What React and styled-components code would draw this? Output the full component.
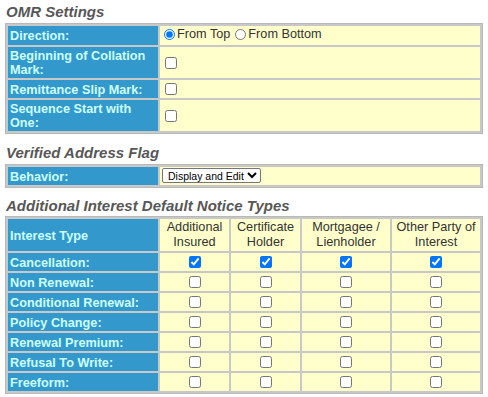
import React from "react";
import styled, { createGlobalStyle } from "styled-components";

const GlobalStyle = createGlobalStyle`
  body {
    margin: 0;
    padding: 3px 5px;
    background: #fff;
    font-family: "Liberation Sans", Arial, sans-serif;
    font-size: 12.7px;
    color: #333;
  }
`;

const interestRows = [
  { label: "Cancellation:", checked: true },
  { label: "Non Renewal:" },
  { label: "Conditional Renewal:" },
  { label: "Policy Change:" },
  { label: "Renewal Premium:" },
  { label: "Refusal To Write:" },
  { label: "Freeform:" },
];

const interestCols = [
  { lines: ["Additional", "Insured"], width: 69 },
  { lines: ["Certificate", "Holder"], width: 69 },
  { lines: ["Mortgagee /", "Lienholder"], width: 88 },
  { lines: ["Other Party of", "Interest"], width: 88 },
];

export default function App() {
  return (
    <Page>
      <GlobalStyle />
      <Heading>OMR Settings</Heading>
      <Grid>
        <tbody>
          <tr>
            <Label>Direction:</Label>
            <Value>
              <RadioLabel>
                <Radio type="radio" name="dir" defaultChecked />
                From Top
              </RadioLabel>
              <RadioLabel>
                <Radio type="radio" name="dir" />
                From Bottom
              </RadioLabel>
            </Value>
          </tr>
          <tr>
            <Label>Beginning of Collation Mark:</Label>
            <Value>
              <Check type="checkbox" />
            </Value>
          </tr>
          <tr>
            <Label>Remittance Slip Mark:</Label>
            <Value>
              <Check type="checkbox" />
            </Value>
          </tr>
          <tr>
            <Label>Sequence Start with One:</Label>
            <Value>
              <Check type="checkbox" />
            </Value>
          </tr>
        </tbody>
      </Grid>

      <Heading $top={10}>Verified Address Flag</Heading>
      <Grid>
        <tbody>
          <tr>
            <Label>Behavior:</Label>
            <Value>
              <Select defaultValue="edit">
                <option value="edit">Display and Edit</option>
                <option value="display">Display Only</option>
              </Select>
            </Value>
          </tr>
        </tbody>
      </Grid>

      <Heading $top={9} $bottom={1}>
        Additional Interest Default Notice Types
      </Heading>
      <Grid>
        <tbody>
          <tr>
            <Label>Interest Type</Label>
            {interestCols.map((col) => (
              <ColHead key={col.lines[0]} $w={col.width}>
                {col.lines[0]}
                <br />
                {col.lines[1]}
              </ColHead>
            ))}
          </tr>
          {interestRows.map((row) => (
            <tr key={row.label}>
              <Label>{row.label}</Label>
              {interestCols.map((col) => (
                <Center key={col.lines[0]}>
                  <Check type="checkbox" defaultChecked={row.checked} />
                </Center>
              ))}
            </tr>
          ))}
        </tbody>
      </Grid>
    </Page>
  );
}

const Page = styled.div`
  width: 478px;
`;

const Heading = styled.h3`
  margin: ${(p) => p.$top || 0}px 0 ${(p) => (p.$bottom ?? 2)}px 1px;
  font-size: 15px;
  font-weight: bold;
  font-style: italic;
  color: #575757;
  line-height: 18px;
`;

const Grid = styled.table`
  width: 478px;
  border-collapse: separate;
  border-spacing: 2px;
  background: #c8c8c8;
  border: 1px solid #b8b8b8;
  table-layout: fixed;
`;

const Label = styled.td`
  box-sizing: border-box;
  width: 150px;
  background: #3399cc;
  color: #ccffff;
  font-weight: bold;
  line-height: 14px;
  padding: 2px 2px 1px;
  vertical-align: middle;
`;

const Value = styled.td`
  box-sizing: border-box;
  background: #ffffcc;
  padding: 1px 2px;
  line-height: 15px;
  vertical-align: middle;
`;

const Center = styled(Value)`
  text-align: center;
`;

const ColHead = styled(Center)`
  width: ${(p) => p.$w}px;
  color: #333;
  line-height: 15px;
  padding: 1px 2px;
`;

const RadioLabel = styled.label`
  display: inline-flex;
  align-items: center;
  margin-right: 3px;
`;

const Radio = styled.input`
  margin: 0 2px;
  width: 11px;
  height: 11px;
`;

const Check = styled.input`
  margin: 2px 3px;
  width: 12px;
  height: 12px;
  vertical-align: middle;
`;

const Select = styled.select`
  font-family: "Liberation Sans", Arial, sans-serif;
  font-size: 10.5px;
  height: 15px;
  padding: 0 0 0 1px;
  color: #000;
  border: 1px solid #767676;
  border-radius: 2px;
  background: #fff;
`;
